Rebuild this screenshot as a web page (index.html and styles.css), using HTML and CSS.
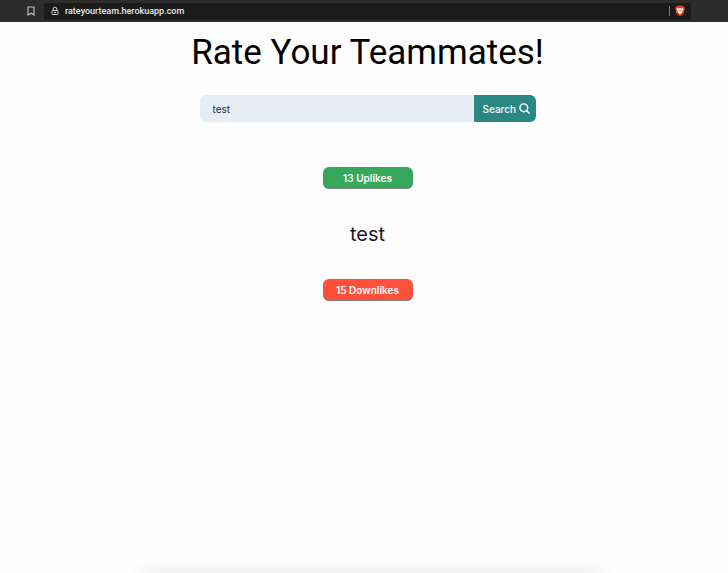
FILE: index.html
```html
<!DOCTYPE html>
<html lang="en">
<head>
  <meta charset="UTF-8" />
  <meta name="viewport" content="width=device-width, initial-scale=1.0"/>
  <title>Rate Your Teammates!</title>
  <link rel="stylesheet" href="styles.css">
</head>
<body>
<header class="browser-bar">
  <button class="bar-button" type="button" aria-label="Bookmark">
    <svg width="8" height="10" viewBox="0 0 8 10" fill="none" stroke="#c4c4c4" stroke-width="1.1"><path d="M1 1h6v8L4 7.200 1 9z"/></svg>
  </button>
  <div class="address">
    <svg width="8" height="10" viewBox="0 0 8 10" fill="none" stroke="#d0d0d0"><path d="M2.200 4.500V3a1.800 1.800 0 0 1 3.600 0v1.500"/><rect x="1" y="4.500" width="6" height="4" rx="0.800"/><path d="M3 6.500h2"/></svg>
    <span class="url">rateyourteam.herokuapp.com</span>
    <span class="divider"></span>
    <svg width="10" height="12" viewBox="0 0 10 12"><path fill="#e8401c" d="M2.500.7h5l.9.900 1 .2.400 1.800-1 4.300-1 1.600L5 11.500 2.200 9.500l-1-1.600-1-4.300.4-1.800 1-.2z"/><path fill="#fff" d="M2 3l1.600.4L5 3l1.400.4L8 3l.5 1-1.300 2 .2 1L5 9.200 2.600 7l.2-1L1.500 4z"/><path fill="#e8401c" d="M3 4.300l1.300.5-.3 1zM7 4.300l-1.300.5.3 1zM4.500 5h1l-.2 1.500h-.6z"/></svg>
  </div>
</header>

<main class="container">
  <h1>Rate Your Teammates!</h1>
  <form class="search">
    <input type="text" name="name" value="test" aria-label="Teammate name">
    <button type="submit">Search
      <svg width="11" height="11" viewBox="0 0 11 11" fill="none" stroke="#fff" stroke-width="1.400" stroke-linecap="round"><circle cx="4.800" cy="4.800" r="3.900"/><path d="M7.700 7.700l2.500 2.500"/></svg>
    </button>
  </form>
  <button class="vote uplikes" type="button">13 Uplikes</button>
  <h2>test</h2>
  <button class="vote downlikes" type="button">15 Downlikes</button>
</main>
<footer class="footer"></footer>
</body>
</html>
```
FILE: styles.css
```css
* {
  margin: 0;
  padding: 0;
  box-sizing: border-box;
}

body {
  font-family: Inter, sans-serif;
  background: #fefefe;
  color: #1a1a26;
  min-height: 100vh;
  display: flex;
  flex-direction: column;
  overflow: hidden;
}

button {
  border: none;
  cursor: pointer;
  font-family: inherit;
}

.browser-bar {
  display: flex;
  align-items: center;
  height: 22px;
  padding: 0 37px 0 27px;
  background: #2c2c2c;
}

.bar-button {
  display: flex;
  margin-right: 9px;
  background: none;
}

.address {
  flex: 1;
  display: flex;
  align-items: center;
  height: 17px;
  padding: 0 6px 0 7px;
  border-radius: 3px;
  background: #1b1b1b;
}

.url {
  flex: 1;
  margin-left: 6px;
  font-family: Roboto, sans-serif;
  font-size: 9px;
  font-weight: 500;
  line-height: 12px;
  color: #e6e6e6;
}

.divider {
  width: 1px;
  height: 10px;
  margin-right: 5px;
  background: #777;
}

.container {
  flex: 1;
  display: flex;
  flex-direction: column;
  align-items: center;
  padding: 8px 0 0 7px;
}

h1 {
  font-family: Roboto, sans-serif;
  font-size: 35px;
  font-weight: 400;
  line-height: 46px;
  color: #000;
}

.search {
  display: flex;
  width: 47%;
  max-width: 336px;
  height: 27px;
  margin: 19px 0 45px;
  border-radius: 6px;
  overflow: hidden;
}

.search input {
  flex: 1;
  min-width: 0;
  padding: 0 13px;
  border: none;
  background: #e6edf4;
  color: #2a2a3a;
  font-family: inherit;
  font-size: 10px;
}

.search button {
  display: flex;
  align-items: center;
  justify-content: space-between;
  width: 62px;
  padding: 0 6px 0 9px;
  background: #2b8783;
  color: #fff;
  font-size: 10px;
  font-weight: 500;
}

.vote {
  width: 90px;
  height: 22px;
  border-radius: 6px;
  box-shadow: inset 0 -1px 0 #808080;
  color: #fff;
  font-size: 10px;
  font-weight: 600;
}

.uplikes {
  background: #35a85c;
}

.downlikes {
  background: #ff503c;
}

h2 {
  margin: 30px 0;
  font-size: 20px;
  font-weight: 400;
  line-height: 30px;
}

/* only the shadow rises above the bottom edge */
.footer {
  width: 62%;
  margin: 0 auto;
  box-shadow: 6px 8px 20px 4px rgba(0, 0, 0, 0.2);
}
```
